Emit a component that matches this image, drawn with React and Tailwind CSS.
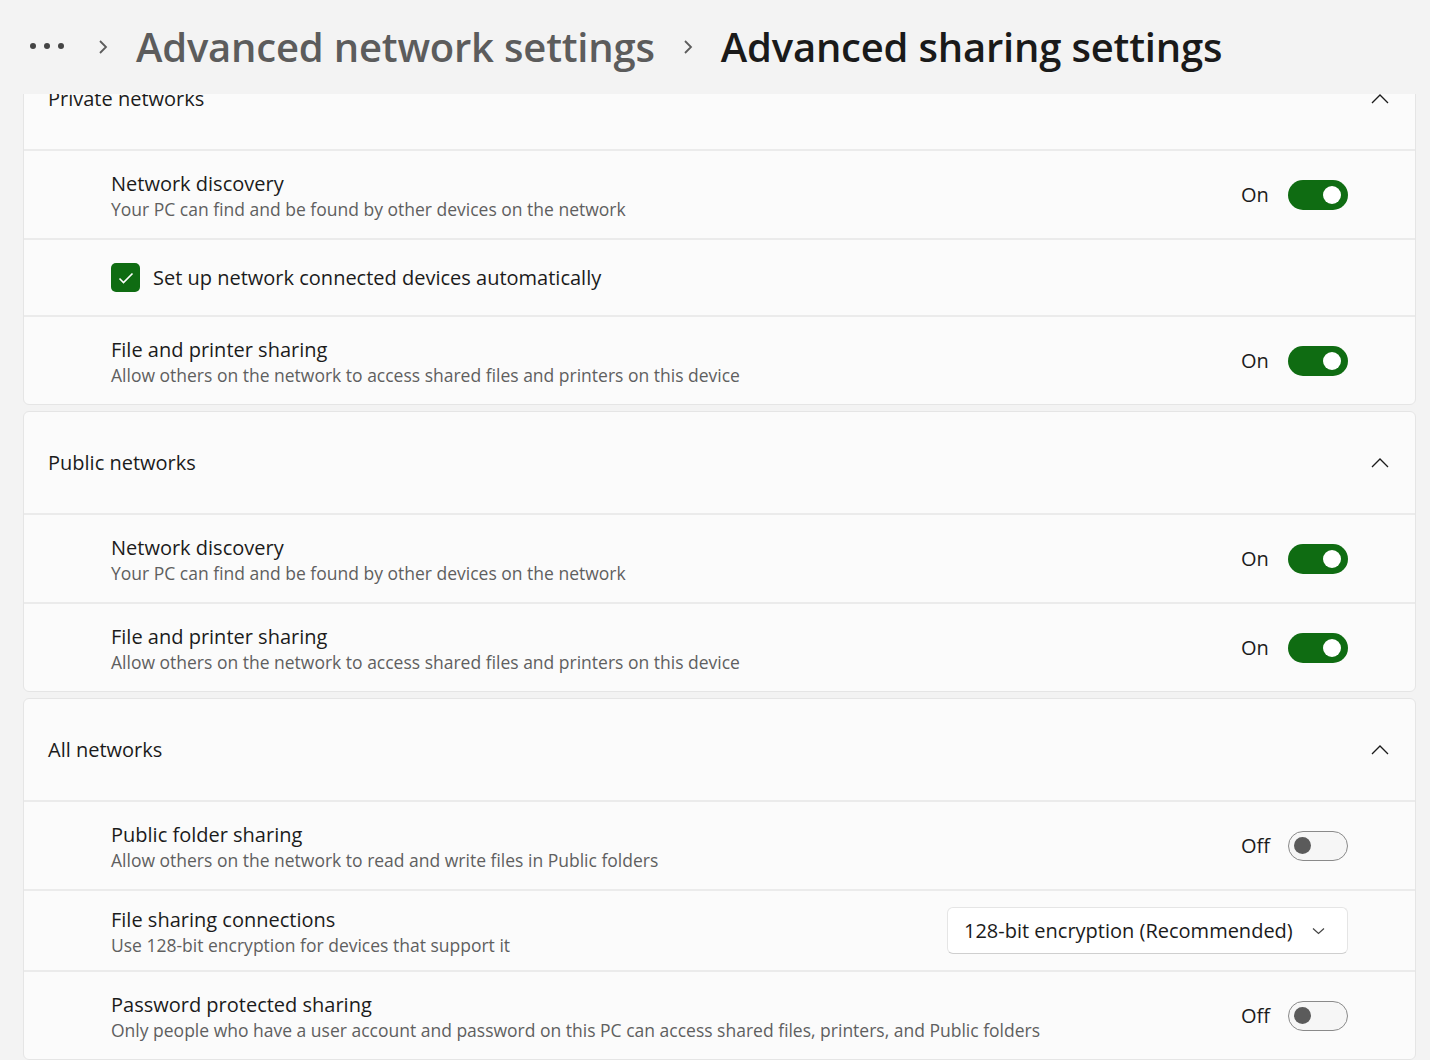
import React from 'react'

const font = "font-['Open_Sans',sans-serif]"

function ChevronUp() {
  return (
    <svg width="18" height="10" viewBox="0 0 18 10" fill="none">
      <path d="M1 9 L9 1 L17 9" stroke="#1b1b1b" strokeWidth="1.3" />
    </svg>
  )
}

function Toggle({ on }) {
  if (on) {
    return (
      <div className="w-[60px] h-[30px] rounded-full bg-[#0f6c12] flex items-center justify-end pr-[7px]">
        <div className="w-[18px] h-[18px] rounded-full bg-white" />
      </div>
    )
  }
  return (
    <div className="w-[60px] h-[30px] rounded-full border-[1.5px] border-[#8a8a8a] bg-[#f6f6f6] flex items-center pl-[5px]">
      <div className="w-[17px] h-[17px] rounded-full bg-[#5b5b5b]" />
    </div>
  )
}

function TextBlock({ title, desc }) {
  return (
    <div className="flex flex-col mt-[2px]">
      <span className="text-[20px] leading-[26px] text-[#1b1b1b]">{title}</span>
      <span className="text-[17.5px] leading-[24px] text-[#5f5f5f]">{desc}</span>
    </div>
  )
}

function ToggleRow({ title, desc, on }) {
  return (
    <div className="h-[89px] border-t-2 border-[#ebebeb] flex items-center justify-between pl-[87px] pr-[67px]">
      <TextBlock title={title} desc={desc} />
      <div className="flex items-center gap-[20px]">
        <span className="text-[20px] text-[#1b1b1b] w-[27px]">{on ? 'On' : 'Off'}</span>
        <Toggle on={on} />
      </div>
    </div>
  )
}

function Card({ title, children }) {
  return (
    <div className="rounded-[6px] border border-[#e5e5e5] bg-[#fbfbfb] overflow-hidden">
      <div className="h-[101px] flex items-center justify-between pl-[24px] pr-[26px]">
        <span className="text-[20px] text-[#1b1b1b]">{title}</span>
        <ChevronUp />
      </div>
      {children}
    </div>
  )
}

function Crumb() {
  return (
    <svg width="10" height="16" viewBox="0 0 10 16" fill="none">
      <path d="M2 2 L8 8 L2 14" stroke="#5c5c5c" strokeWidth="1.8" />
    </svg>
  )
}

export default function App() {
  return (
    <div className={`${font} w-full h-[1060px] bg-[#f3f3f3] flex flex-col overflow-hidden`}>
      <header className="h-[94px] shrink-0 flex items-center pl-[30px] relative z-10 bg-[#f3f3f3]">
        <span className="flex gap-[8px] items-center mr-[34px] mt-[-2px]">
          <span className="w-[6px] h-[6px] rounded-full bg-[#444]" />
          <span className="w-[6px] h-[6px] rounded-full bg-[#444]" />
          <span className="w-[6px] h-[6px] rounded-full bg-[#444]" />
        </span>
        <span className="mr-[28px]"><Crumb /></span>
        <span className="text-[40px] leading-none text-[#5c5c5c] font-semibold tracking-[-0.005em]">Advanced network settings</span>
        <span className="mx-[28px]"><Crumb /></span>
        <span className="text-[40px] leading-none text-[#1a1a1a] font-semibold tracking-[-0.005em]">Advanced sharing settings</span>
      </header>

      <div className="flex-1 overflow-hidden pl-[23px] pr-[14px]">
        <div className="-mt-[47px] flex flex-col gap-[6px]">
          <Card title="Private networks">
            <ToggleRow title="Network discovery" desc="Your PC can find and be found by other devices on the network" on />
            <div className="h-[77px] border-t-2 border-[#ebebeb] flex items-center pl-[87px]">
              <div className="w-[29px] h-[29px] rounded-[5px] bg-[#0f6c12] flex items-center justify-center mr-[13px]">
                <svg width="16" height="12" viewBox="0 0 16 12" fill="none">
                  <path d="M1.5 6.5 L5.5 10.5 L14.5 1.5" stroke="white" strokeWidth="1.6" />
                </svg>
              </div>
              <span className="text-[20px] text-[#1b1b1b]">Set up network connected devices automatically</span>
            </div>
            <ToggleRow title="File and printer sharing" desc="Allow others on the network to access shared files and printers on this device" on />
          </Card>

          <Card title="Public networks">
            <ToggleRow title="Network discovery" desc="Your PC can find and be found by other devices on the network" on />
            <ToggleRow title="File and printer sharing" desc="Allow others on the network to access shared files and printers on this device" on />
          </Card>

          <Card title="All networks">
            <ToggleRow title="Public folder sharing" desc="Allow others on the network to read and write files in Public folders" on={false} />
            <div className="h-[81px] border-t-2 border-[#ebebeb] flex items-center justify-between pl-[87px] pr-[67px]">
              <TextBlock title="File sharing connections" desc="Use 128-bit encryption for devices that support it" />
              <div className="w-[401px] h-[47px] rounded-[6px] bg-white border border-[#e5e5e5] border-b-[#cfcfcf] flex items-center justify-between pl-[16px] pr-[22px]">
                <span className="text-[20px] text-[#1b1b1b]">128-bit encryption (Recommended)</span>
                <svg width="13" height="8" viewBox="0 0 13 8" fill="none">
                  <path d="M1 1.5 L6.5 6.5 L12 1.5" stroke="#444" strokeWidth="1.2" />
                </svg>
              </div>
            </div>
            <ToggleRow title="Password protected sharing" desc="Only people who have a user account and password on this PC can access shared files, printers, and Public folders" on={false} />
          </Card>
        </div>
      </div>
    </div>
  )
}
